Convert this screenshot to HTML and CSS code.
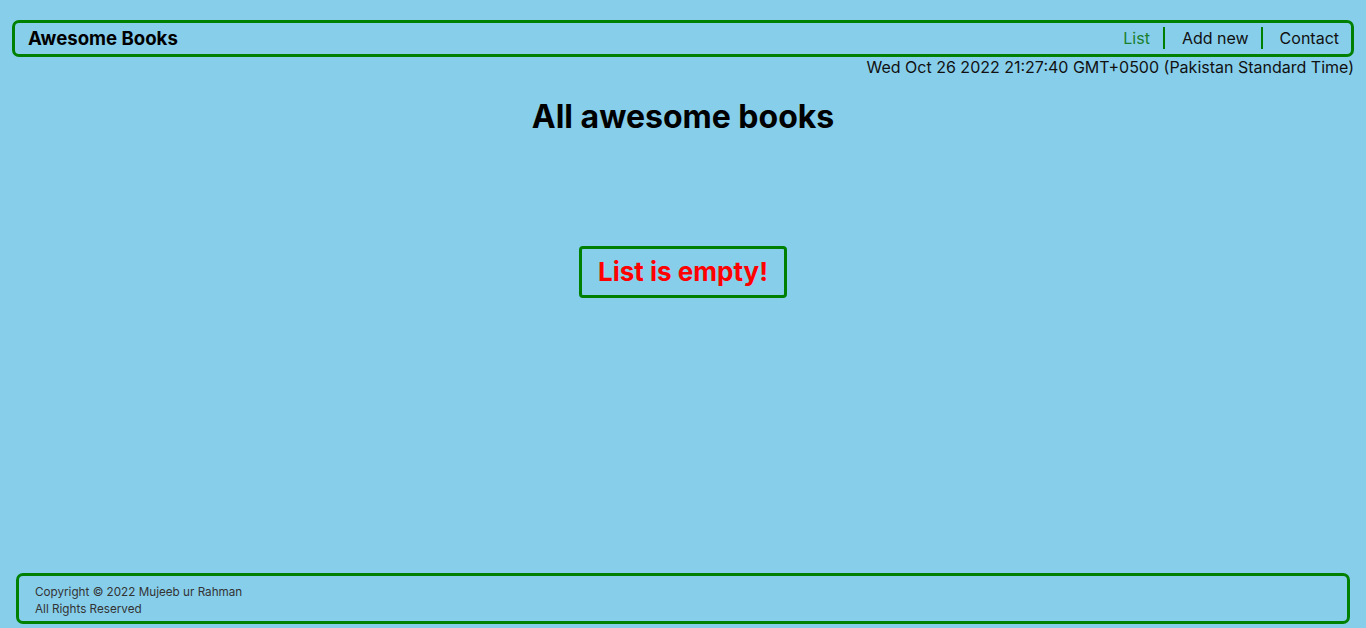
FILE: index.html
```html
<!DOCTYPE html>
<html lang="en">
<head>
<meta charset="utf-8">
<title>Awesome Books</title>
<link rel="stylesheet" href="styles.css">
</head>
<body>
  <header class="topbar">
    <div class="brand">Awesome Books</div>
    <nav>
      <ul class="nav">
        <li class="nav-item active">List</li>
        <li class="nav-item">Add new</li>
        <li class="nav-item">Contact</li>
      </ul>
    </nav>
  </header>
  <div class="date">Wed Oct 26 2022 21:27:40 GMT+0500 (Pakistan Standard Time)</div>
  <main class="content">
    <h1 class="title">All awesome books</h1>
    <div class="empty">List is empty!</div>
  </main>
  <footer class="footer">
    <p>Copyright © 2022 Mujeeb ur Rahman</p>
    <p>All Rights Reserved</p>
  </footer>
</body>
</html>
```
FILE: styles.css
```css
* { box-sizing: border-box; }

html, body {
  margin: 0;
  padding: 0;
}

body {
  background: #87ceeb;
  font-family: "Inter", "Liberation Sans", sans-serif;
  color: #000;
  min-height: 100vh;
  display: flex;
  flex-direction: column;
}

.topbar {
  margin: 20px 12px 0;
  border: 3px solid #008000;
  border-radius: 7px;
  display: flex;
  justify-content: space-between;
  align-items: center;
  padding: 4px 0 5px 13px;
}

.brand {
  font-size: 18.6px;
  font-weight: 700;
  line-height: 22px;
}

.nav {
  list-style: none;
  margin: 0;
  padding: 0;
  display: flex;
}

.nav-item {
  font-size: 16px;
  line-height: 22px;
  padding: 0 12px 0 17px;
  color: #111;
}

.nav-item + .nav-item {
  border-left: 2px solid #008000;
}

.nav-item.active {
  color: #1a7f2c;
  padding-right: 13px;
}

.date {
  text-align: right;
  padding-right: 12px;
  margin-top: 0;
  font-size: 16px;
  line-height: 20px;
  color: #111;
}

.content {
  display: flex;
  flex-direction: column;
  align-items: center;
}

.title {
  margin: 20px 0 0;
  font-size: 32px;
  line-height: 39px;
  font-weight: 700;
}

.empty {
  margin-top: 110px;
  border: 3px solid #008000;
  border-radius: 4px;
  padding: 8px 16px;
  font-size: 26px;
  line-height: 30px;
  font-weight: 700;
  color: #f00;
}

.footer {
  margin: auto 16px 4px;
  border: 3px solid #008000;
  border-radius: 7px;
  padding: 8px 16px 3px;
  font-size: 11.7px;
  line-height: 17px;
  color: #333;
}

.footer p {
  margin: 0;
}
```
